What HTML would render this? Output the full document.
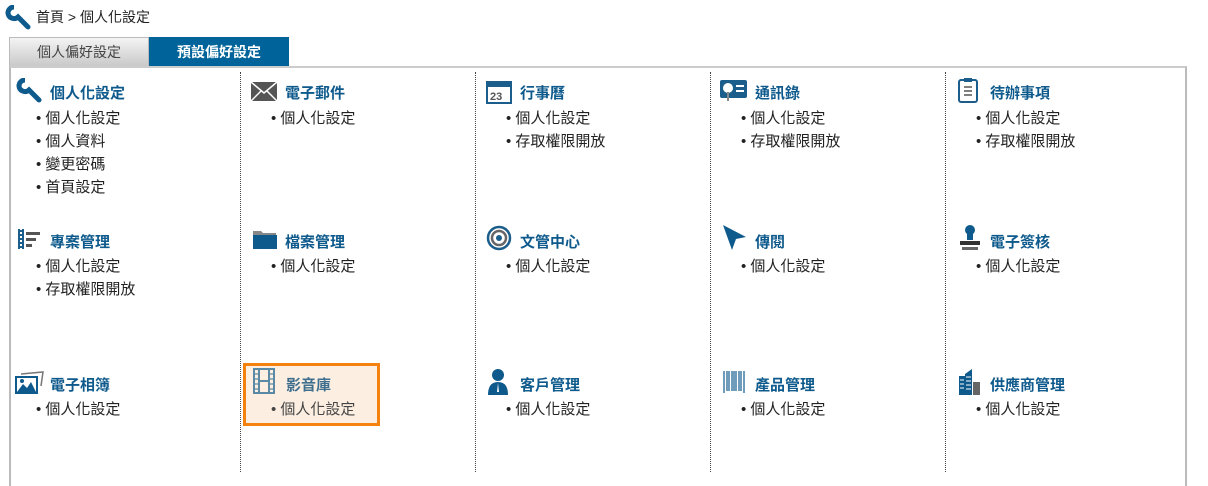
<!DOCTYPE html>
<html><head><meta charset="utf-8"><style>
*{margin:0;padding:0;box-sizing:border-box}
body{width:1208px;height:472px;background:#fff;font-family:"Liberation Sans","Noto Sans CJK TC",sans-serif;position:relative;overflow:hidden;color:#222}
.a{position:absolute}
.crumb{left:36px;top:7px;font-size:14px;color:#222}
.tab{top:37px;height:30px;width:140px;font-size:14px;text-align:center;line-height:29px}
.t1{left:9px;background:linear-gradient(#f4f4f4,#c9c9c9);border:1px solid #bbb;color:#444}
.t2{left:149px;background:#00649a;color:#fff;font-weight:bold;border:1px solid #00649a}
.box{left:9px;top:66px;width:1178px;height:420px;border-left:2px solid #bbb;border-top:2px solid #ccc;border-right:2px solid #bbb}
.dot{top:72px;height:400px;border-left:1px dotted #444}
.h{font-size:15px;font-weight:bold;color:#0e5a8c}
.it{font-size:15px;color:#222;line-height:23px}
.hl{left:243px;top:363px;width:137px;height:63px;border:3px solid #f5820f;background:#fcefe2}
svg{position:absolute}
</style></head><body>
<svg style="left:5px;top:5px" width="28" height="28" viewBox="0 0 28 28"><path d="M3 8 A6 6 0 0 0 13 12 L23 22" stroke="#0e5a8c" stroke-width="5" fill="none" stroke-linecap="round"/><path d="M3 8 A6 6 0 0 1 9 2" stroke="#0e5a8c" stroke-width="5" fill="none"/></svg>
<div class="a crumb">首頁 &gt; 個人化設定</div>
<div class="a tab t1">個人偏好設定</div>
<div class="a tab t2">預設偏好設定</div>
<div class="a box"></div>
<div class="a dot" style="left:240px"></div>
<div class="a dot" style="left:475px"></div>
<div class="a dot" style="left:710px"></div>
<div class="a dot" style="left:945px"></div>
<div class="a hl"></div>

<!-- row1 -->
<svg style="left:15px;top:78px" width="30" height="28" viewBox="0 0 28 28"><path d="M3 8 A6 6 0 0 0 13 12 L23 22" stroke="#0e5a8c" stroke-width="5" fill="none" stroke-linecap="round"/><path d="M3 8 A6 6 0 0 1 9 2" stroke="#0e5a8c" stroke-width="5" fill="none"/></svg>
<div class="a h" style="left:50px;top:82px">個人化設定</div>
<div class="a it" style="left:36px;top:107px">• 個人化設定<br>• 個人資料<br>• 變更密碼<br>• 首頁設定</div>

<svg style="left:251px;top:82px" width="26" height="19"><rect x="0" y="0" width="26" height="19" fill="#555"/><path d="M0 0 L13 11 L26 0 M0 19 L10 9 M26 19 L16 9" stroke="#fff" stroke-width="1.5" fill="none"/></svg>
<div class="a h" style="left:285px;top:82px">電子郵件</div>
<div class="a it" style="left:271px;top:107px">• 個人化設定</div>

<svg style="left:486px;top:78px" width="26" height="26"><rect x="1" y="4" width="24" height="21" fill="#fff" stroke="#1b5e8c" stroke-width="2"/><rect x="1" y="4" width="24" height="5" fill="#1b5e8c"/><text x="4" y="22" font-size="11" font-weight="bold" fill="#555" font-family="Liberation Sans">23</text></svg>
<div class="a h" style="left:520px;top:82px">行事曆</div>
<div class="a it" style="left:506px;top:107px">• 個人化設定<br>• 存取權限開放</div>

<svg style="left:720px;top:80px" width="28" height="22"><rect x="0" y="0" width="27" height="18" rx="2" fill="#1b5e8c"/><circle cx="8" cy="8" r="5" fill="#fff"/><rect x="7" y="12" width="2" height="9" fill="#888"/><rect x="16" y="5" width="8" height="2" fill="#fff"/><rect x="16" y="10" width="8" height="2" fill="#fff"/></svg>
<div class="a h" style="left:755px;top:82px">通訊錄</div>
<div class="a it" style="left:741px;top:107px">• 個人化設定<br>• 存取權限開放</div>

<svg style="left:958px;top:77px" width="22" height="27"><rect x="1" y="3" width="18" height="22" rx="2" fill="none" stroke="#1b5e8c" stroke-width="2"/><rect x="6" y="1" width="8" height="4" fill="#1b5e8c"/><path d="M6 10h8M6 14h8M6 18h8" stroke="#555" stroke-width="1.5"/></svg>
<div class="a h" style="left:990px;top:82px">待辦事項</div>
<div class="a it" style="left:976px;top:107px">• 個人化設定<br>• 存取權限開放</div>

<!-- row2 -->
<svg style="left:17px;top:226px" width="26" height="26"><path d="M2 3v20M6 3v20M2 5h4M2 9h4M2 13h4M2 17h4M2 21h4" stroke="#1b5e8c" stroke-width="2"/><rect x="9" y="6" width="14" height="3" fill="#555"/><rect x="9" y="12" width="10" height="3" fill="#555"/><rect x="9" y="18" width="6" height="3" fill="#555"/></svg>
<div class="a h" style="left:50px;top:231px">專案管理</div>
<div class="a it" style="left:36px;top:255px">• 個人化設定<br>• 存取權限開放</div>

<svg style="left:252px;top:228px" width="26" height="22"><path d="M1 3h8l2 2h13v3H1z" fill="#888"/><rect x="1" y="7" width="24" height="14" fill="#0e5a8c"/></svg>
<div class="a h" style="left:285px;top:231px">檔案管理</div>
<div class="a it" style="left:271px;top:255px">• 個人化設定</div>

<svg style="left:486px;top:225px" width="26" height="26"><circle cx="13" cy="13" r="11" fill="none" stroke="#1b5e8c" stroke-width="2.5"/><circle cx="13" cy="13" r="7" fill="none" stroke="#666" stroke-width="2.5"/><circle cx="13" cy="13" r="3" fill="#1b5e8c"/></svg>
<div class="a h" style="left:520px;top:231px">文管中心</div>
<div class="a it" style="left:506px;top:255px">• 個人化設定</div>

<svg style="left:722px;top:224px" width="26" height="28"><path d="M1 1 L24 13 L14 15 L10 26Z" fill="#0e5a8c"/></svg>
<div class="a h" style="left:755px;top:231px">傳閱</div>
<div class="a it" style="left:741px;top:255px">• 個人化設定</div>

<svg style="left:958px;top:224px" width="24" height="28"><circle cx="12" cy="6" r="5" fill="#0e5a8c"/><rect x="9" y="8" width="6" height="8" fill="#0e5a8c"/><rect x="2" y="17" width="20" height="4" fill="#333"/><rect x="4" y="23" width="16" height="3" fill="#666"/></svg>
<div class="a h" style="left:990px;top:231px">電子簽核</div>
<div class="a it" style="left:976px;top:255px">• 個人化設定</div>

<!-- row3 -->
<svg style="left:15px;top:370px" width="30" height="26"><path d="M6 4 L28 2 L26 16" fill="none" stroke="#777" stroke-width="1.5"/><rect x="1" y="7" width="21" height="16" fill="#fff" stroke="#0e5a8c" stroke-width="2"/><path d="M2 22 L8 14 L12 18 L16 12 L21 22Z" fill="#0e5a8c"/><circle cx="7" cy="11" r="2" fill="#0e5a8c"/></svg>
<div class="a h" style="left:50px;top:374px">電子相簿</div>
<div class="a it" style="left:36px;top:398px">• 個人化設定</div>

<svg style="left:253px;top:368px" width="22" height="26"><rect x="1" y="1" width="20" height="24" fill="none" stroke="#5a8aa6" stroke-width="2"/><path d="M6 1v24M16 1v24M6 13h10" stroke="#5a8aa6" stroke-width="2"/><path d="M1 6h5M1 11h5M1 16h5M1 21h5M16 6h5M16 11h5M16 16h5M16 21h5" stroke="#5a8aa6" stroke-width="1.2"/></svg>
<div class="a h" style="left:286px;top:374px;color:#3f6f8f">影音庫</div>
<div class="a it" style="left:271px;top:398px;color:#444">• 個人化設定</div>

<svg style="left:487px;top:368px" width="22" height="28"><circle cx="11" cy="7" r="6" fill="#0e5a8c"/><path d="M1 27 Q1 14 11 14 Q21 14 21 27Z" fill="#0e5a8c"/><path d="M11 15 L12 24 L10 24Z" fill="#fff"/></svg>
<div class="a h" style="left:520px;top:374px">客戶管理</div>
<div class="a it" style="left:506px;top:398px">• 個人化設定</div>

<svg style="left:723px;top:371px" width="24" height="22"><path d="M1 0v22M4 0v20M6 0v20M9 0v20M11 0v20M13 0v20M16 0v20M18 0v20M21 0v22" stroke="#0e5a8c" stroke-width="1.2"/></svg>
<div class="a h" style="left:755px;top:374px">產品管理</div>
<div class="a it" style="left:741px;top:398px">• 個人化設定</div>

<svg style="left:958px;top:368px" width="24" height="28"><rect x="1" y="8" width="6" height="19" fill="#0e5a8c"/><path d="M7 6 L14 1 L14 27 L7 27Z" fill="#0e5a8c"/><rect x="15" y="14" width="7" height="13" fill="#666"/><path d="M2 12h4M2 16h4M2 20h4M8 9h5M8 13h5M8 17h5M8 21h5" stroke="#fff" stroke-width="1"/></svg>
<div class="a h" style="left:990px;top:374px">供應商管理</div>
<div class="a it" style="left:976px;top:398px">• 個人化設定</div>
</body></html>
